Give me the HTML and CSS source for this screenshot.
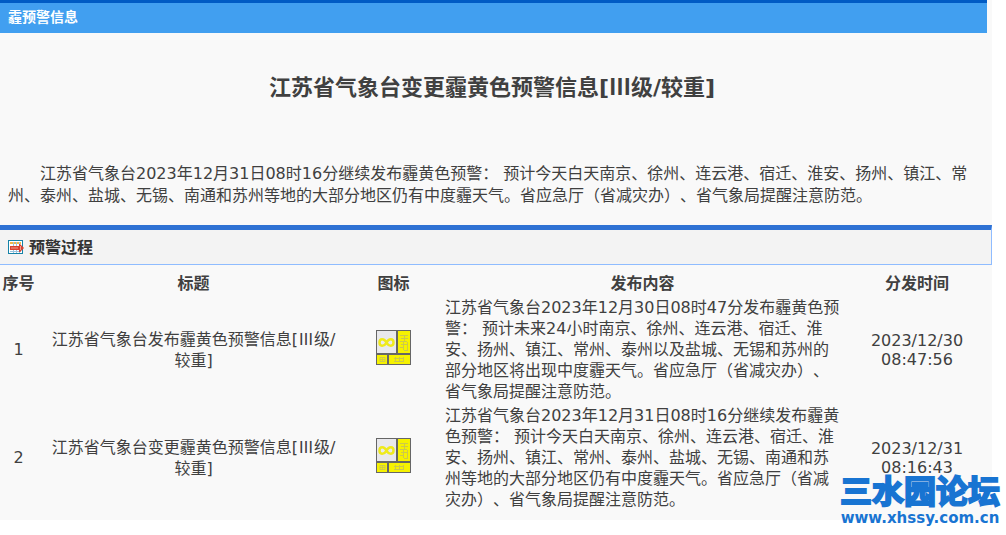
FILE: index.html
```html
<!DOCTYPE html>
<html lang="zh-CN">
<head>
<meta charset="utf-8">
<title>霾预警信息</title>
<link rel="stylesheet" href="styles.css">
</head>
<body>
<svg class="defs" aria-hidden="true">
  <symbol id="haze" viewBox="0 0 35 35">
    <rect width="35" height="35" fill="#666"/>
    <rect x="1" y="1" width="19" height="22" fill="#e9e9ec"/>
    <rect x="22" y="1" width="12" height="22" fill="#f6f200"/>
    <rect x="1" y="25" width="10" height="9" fill="#f6f200"/>
    <rect x="13" y="25" width="21" height="9" fill="#f6f200"/>
    <path d="M10.500 12.500C8 8 3.500 8.500 3.500 12.500S8 17 10.500 12.500S17.500 8.500 17.500 12.500S13 17 10.500 12.500" fill="none" stroke="#efea1c" stroke-width="2.500"/>
    <g fill="none" stroke="#c4c060" stroke-width="1" opacity=".8">
      <path d="M24 5.500h8M25 8.500h7M28.500 5v7M24 11.500h7M25 14.500h7M27.500 12v8M31.500 12v8M24 17.500h4M28 20.500h4"/>
      <path d="M4 27.500h5v4H4zM6.500 27v5M4 29.500h5M18 28.500h10M18 31.500h10M19.500 27v5M23.500 27v5M27.500 27v5"/>
    </g>
  </symbol>
</svg>
<main class="page">
  <header class="bar">霾预警信息</header>
  <article class="notice">
    <h1 class="title">江苏省气象台变更霾黄色预警信息[<span class="cjk">Ⅲ</span>级/较重]</h1>
    <p class="text">江苏省气象台2023年12月31日08时16分继续发布霾黄色预警： 预计今天白天南京、徐州、连云港、宿迁、淮安、扬州、镇江、常州、泰州、盐城、无锡、南通和苏州等地的大部分地区仍有中度霾天气。省应急厅（省减灾办）、省气象局提醒注意防范。</p>
  </article>
  <h2 class="section">
    <svg class="section-icon" viewBox="0 0 16 15" aria-hidden="true">
      <rect x=".5" y=".5" width="14" height="13" fill="#fff" stroke="#1683a8"/>
      <path d="M2 3h11" stroke="#f0b848" stroke-width="2"/>
      <path d="M2 11.500h11M5.500 2v11M8.500 2v11M11.500 2v11" stroke="#9cc4de"/>
      <path d="M2 6h9V4h1l4 4-4 4h-1v-2H2z" fill="#d9412f"/>
      <path d="M3 8h7M12.500 6v4" stroke="#f4a08e"/>
    </svg>预警过程
  </h2>
  <table class="history">
    <thead>
      <tr><th class="no">序号</th><th class="name">标题</th><th class="pic">图标</th><th class="content">发布内容</th><th class="time">分发时间</th></tr>
    </thead>
    <tbody>
      <tr>
        <td class="no">1</td>
        <td class="name">江苏省气象台发布霾黄色预警信息[<span class="cjk">Ⅲ</span>级/较重]</td>
        <td class="pic"><svg class="haze" role="img" aria-label="霾黄色预警"><use href="#haze"/></svg></td>
        <td class="content">江苏省气象台2023年12月30日08时47分发布霾黄色预警： 预计未来24小时南京、徐州、连云港、宿迁、淮安、扬州、镇江、常州、泰州以及盐城、无锡和苏州的部分地区将出现中度霾天气。省应急厅（省减灾办）、省气象局提醒注意防范。</td>
        <td class="time">2023/12/30 <br>08:47:56</td>
      </tr>
      <tr>
        <td class="no">2</td>
        <td class="name">江苏省气象台变更霾黄色预警信息[<span class="cjk">Ⅲ</span>级/较重]</td>
        <td class="pic"><svg class="haze" role="img" aria-label="霾黄色预警"><use href="#haze"/></svg></td>
        <td class="content">江苏省气象台2023年12月31日08时16分继续发布霾黄色预警： 预计今天白天南京、徐州、连云港、宿迁、淮安、扬州、镇江、常州、泰州、盐城、无锡、南通和苏州等地的大部分地区仍有中度霾天气。省应急厅（省减灾办）、省气象局提醒注意防范。</td>
        <td class="time">2023/12/31 <br>08:16:43</td>
      </tr>
    </tbody>
  </table>
</main>
<div class="watermark"><span class="forum">三水园论坛</span><span class="site">www.xhssy.com.cn</span></div>
</body>
</html>
```
FILE: styles.css
```css
* { box-sizing: border-box; }
body {
  margin: 0;
  min-height: 100vh;
  position: relative;
  background: #fff;
  color: #404040;
  font: 16px/21px "DejaVu Sans", "Noto Sans CJK SC", sans-serif;
  text-spacing-trim: space-all;
}
.defs { display: none; }
.page { margin-right: 14px; padding-bottom: 7px; background: #f9f9f9; }
.bar {
  margin-right: 5px;
  padding: 4px 8px 5px;
  border-top: 3px solid #005bc4;
  background: #419ff0;
  color: #fff;
  font-size: 14px;
  font-weight: bold;
}
.notice { padding: 38px 8px 18px; }
.title {
  margin: 0 8px 0 0;
  font-size: 22px;
  line-height: 34px;
  text-align: center;
}
.cjk { font-family: "Noto Sans CJK SC", sans-serif; line-height: 1; }
.text { margin: 58px 0 0; line-height: 22px; text-indent: 2em; }
.section {
  display: flex;
  align-items: center;
  gap: 5px;
  margin: 0;
  padding: 7px 8px 6px;
  border-style: solid;
  border-width: 5px 1px 1px 0;
  border-color: #2f72d4 #8fbcff #8fbcff;
  background: #f3f3f3;
  color: #333;
  font-size: 16px;
}
.section-icon { width: 16px; height: 15px; }
.history {
  width: calc(100% - 6px);
  border-collapse: collapse;
  table-layout: fixed;
}
.history th { padding: 8px 0 3px; }
.history td { padding: 0 0 3px; text-align: center; }
.history .no { width: 37px; }
.history .name { padding-left: 12px; padding-right: 12px; }
.history .pic { width: 87px; }
.history .content { width: 411px; }
.history td.content { padding-left: 8px; padding-right: 6px; text-align: left; }
.history .time { width: 138px; }
.history td.time { line-height: 19px; }
.haze { display: block; width: 35px; height: 35px; margin: 0 auto 4px; }
.watermark {
  position: absolute;
  right: 6px;
  bottom: 8px;
  display: flex;
  flex-direction: column;
  align-items: center;
  color: #1874d2;
  font-weight: bold;
}
.forum {
  font-size: 32px;
  line-height: 34px;
  -webkit-text-stroke: 2px #1874d2;
}
.site { font-size: 15px; line-height: 18px; }
```
